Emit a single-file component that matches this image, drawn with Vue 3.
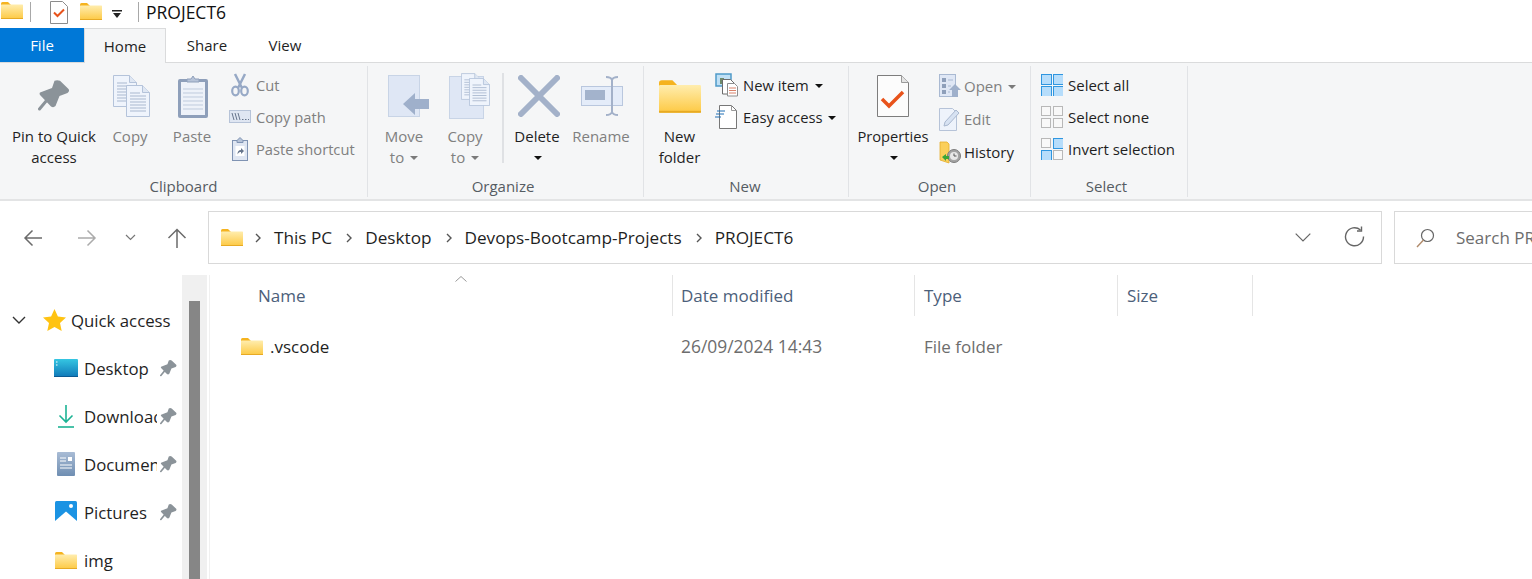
<template>
  <div class="explorer">
    <svg class="defs" aria-hidden="true">
      <defs>
        <linearGradient id="folderFill" x1="0" y1="0" x2="0" y2="1">
          <stop offset="0" stop-color="#ffedae" />
          <stop offset="1" stop-color="#fdc943" />
        </linearGradient>
        <linearGradient id="desktopFill" x1="0" y1="0" x2="0" y2="1">
          <stop offset="0" stop-color="#35c6e2" />
          <stop offset="1" stop-color="#0f78b8" />
        </linearGradient>
        <linearGradient id="docsFill" x1="0" y1="0" x2="0" y2="1">
          <stop offset="0" stop-color="#a9bcd5" />
          <stop offset="1" stop-color="#6f8eb2" />
        </linearGradient>
        <symbol id="folder" viewBox="0 0 22 17">
          <path d="M0 1.500Q0 0 1.500 0H7l3 3H0z" fill="#f5b31f" />
          <rect y="2.500" width="22" height="14.500" rx="0.600" fill="url(#folderFill)" />
          <rect y="16" width="22" height="1" fill="#e7aa24" />
        </symbol>
        <symbol id="pin" viewBox="0 0 32 32">
          <path d="M2 12.500Q1 14 2.500 15.500L13 26.500Q15.500 28 17.500 26L21.500 16 29.500 13Q32 11 30.500 9L22 .8Q19-.5 16.500.8L14 8z" fill="#8b9399" />
          <path d="M9 20 1.500 29" stroke="#8b9399" stroke-width="3" stroke-linecap="round" />
        </symbol>
        <symbol id="sheet" viewBox="0 0 24 32">
          <path d="M.5.500h16l7 7v24H.5z" fill="#eff4fc" stroke="#b4c3da" />
          <path d="M16.500.500v7h7" fill="#dfe7f3" stroke="#b4c3da" />
          <path d="M4 8h10M4 11h16M4 14h16M4 17h16M4 20h16M4 23h16M4 26h16" stroke="#a9b8cf" />
        </symbol>
      </defs>
    </svg>

    <header class="titlebar">
      <svg class="qa-folder" width="22" height="17"><use href="#folder" /></svg>
      <span class="qa-sep"></span>
      <svg class="qa-check" width="18" height="23" viewBox="0 0 18 23">
        <path d="M.5.500h12l5 5v17H.5z" fill="#fff" stroke="#8c8c8c" />
        <path d="M4 11.500l3.500 3.500L14 8.500" fill="none" stroke="#e8531b" stroke-width="2" />
      </svg>
      <svg class="qa-folder-two" width="22" height="17"><use href="#folder" /></svg>
      <svg class="qa-drop" width="10" height="8" viewBox="0 0 10 8">
        <rect width="10" height="1.500" fill="#222" />
        <path d="M1 3h8L5 8z" fill="#222" />
      </svg>
      <span class="qa-sep qa-sep-two"></span>
      <span class="window-title">PROJECT6</span>
    </header>

    <nav class="tabs">
      <span class="tab tab-file">File</span>
      <span class="tab tab-home">Home</span>
      <span class="tab tab-share">Share</span>
      <span class="tab tab-view">View</span>
    </nav>

    <section class="ribbon">
      <div class="group group-clipboard">
        <div class="group-body">
          <div class="large btn-pin">
            <div class="large-icon"><svg width="32" height="32"><use href="#pin" /></svg></div>
            <span>Pin to Quick<br />access</span>
          </div>
          <div class="large btn-copy off">
            <div class="large-icon">
              <svg width="38" height="42" viewBox="0 0 38 42">
                <use href="#sheet" width="24" height="32" />
                <use href="#sheet" x="13" y="10" width="24" height="32" />
              </svg>
            </div>
            <span>Copy</span>
          </div>
          <div class="large btn-paste off">
            <div class="large-icon">
              <svg width="30" height="43" viewBox="0 0 30 43">
                <rect y="4" width="30" height="39" rx="2" fill="#8e9fba" />
                <rect x="3" y="7" width="24" height="33" fill="#eef2f9" />
                <path d="M5 14h20M5 18h20M5 22h20M5 26h20M5 30h20M5 34h20" stroke="#bfcbdd" />
                <path d="M9 7V4h4l2-3 2 3h4v3z" fill="#b6c3d8" stroke="#8e9fba" />
              </svg>
            </div>
            <span>Paste</span>
          </div>
          <div class="small-col off clip-col">
            <div class="small">
              <svg width="24" height="24" viewBox="0 0 24 24">
                <path d="M7 1l7 14M17 1l-7 14" stroke="#97a9c6" stroke-width="2.500" fill="none" />
                <ellipse cx="7.500" cy="18" rx="3.300" ry="4.300" fill="none" stroke="#97a9c6" stroke-width="2.200" />
                <ellipse cx="16.500" cy="18" rx="3.300" ry="4.300" fill="none" stroke="#97a9c6" stroke-width="2.200" />
              </svg>
              <span>Cut</span>
            </div>
            <div class="small">
              <svg width="24" height="24" viewBox="0 0 24 24">
                <rect x="1.500" y="5.500" width="21" height="12" fill="#dfe6f2" stroke="#b6c3d8" />
                <path d="M4 8l2 7M7 8l2 7M10 8l2 7" stroke="#66758c" />
                <path d="M14 14.500h1.500M17 14.500h1.500M20 14.500h1" stroke="#66758c" />
              </svg>
              <span>Copy path</span>
            </div>
            <div class="small">
              <svg width="24" height="24" viewBox="0 0 24 24">
                <rect x="4.500" y="3.500" width="15" height="20" fill="#dfe6f2" stroke="#7f93b3" />
                <path d="M9 3.500l3-3 3 3v2H9z" fill="#b6c3d8" stroke="#7f93b3" />
                <rect x="7.500" y="9" width="9" height="10" fill="#fff" />
                <path d="M9.500 17.500c0-3 1-4.500 3.500-4.500v-2l3 3-3 3v-2c-1.500 0-2.500.5-3.500 2.500z" fill="#66758c" />
              </svg>
              <span>Paste shortcut</span>
            </div>
          </div>
        </div>
        <div class="group-name">Clipboard</div>
      </div>

      <div class="group group-organize">
        <div class="group-body">
          <div class="large btn-move off">
            <div class="large-icon">
              <svg width="42" height="42" viewBox="0 0 42 42">
                <rect x=".5" y=".5" width="31" height="41" fill="#dfe7f5" stroke="#c8d4e6" />
                <path d="M15 29 27 18v6h14v10H27v6z" fill="#9fb0cb" />
              </svg>
            </div>
            <span>Move<br />to <i class="caret"></i></span>
          </div>
          <div class="large btn-copyto off">
            <div class="large-icon">
              <svg width="42" height="46" viewBox="0 0 42 46">
                <rect x=".5" y="3.500" width="34" height="42" fill="#dfe7f5" stroke="#c8d4e6" />
                <use href="#sheet" x="12" y="0" width="20" height="27" />
                <use href="#sheet" x="20" y="5" width="21" height="28" />
              </svg>
            </div>
            <span>Copy<br />to <i class="caret"></i></span>
          </div>
          <span class="inner-sep"></span>
          <div class="large btn-delete">
            <div class="large-icon">
              <svg width="42" height="42" viewBox="0 0 42 42">
                <path d="M3 3l36 36M39 3 3 39" stroke="#a3b1c9" stroke-width="6" stroke-linecap="round" />
              </svg>
            </div>
            <span>Delete<br /><i class="caret dark"></i></span>
          </div>
          <div class="large btn-rename off">
            <div class="large-icon">
              <svg width="42" height="40" viewBox="0 0 42 40">
                <rect x=".5" y="10.500" width="41" height="19" fill="#e4ecf9" stroke="#b9c7de" />
                <rect x="4" y="14" width="20" height="10" fill="#a3b3cc" />
                <path d="M25 1q5 0 6 3 1-3 6-3M31 4v32M25 39q5 0 6-3 1 3 6 3" fill="none" stroke="#a3b1c9" stroke-width="2" />
              </svg>
            </div>
            <span>Rename</span>
          </div>
        </div>
        <div class="group-name">Organize</div>
      </div>

      <div class="group group-new">
        <div class="group-body">
          <div class="large btn-newfolder">
            <div class="large-icon"><svg width="42" height="33"><use href="#folder" /></svg></div>
            <span>New<br />folder</span>
          </div>
          <div class="small-col">
            <div class="small">
              <svg width="24" height="24" viewBox="0 0 24 24">
                <rect x="1" y="1" width="15" height="12" fill="#bfe0f5" stroke="#4f9ac9" stroke-width="1.500" />
                <rect x="5" y="5" width="4" height="6" fill="#6f8a6a" />
                <path d="M7.500 6.500h8l4 4V21h-12z" fill="#fff" stroke="#6b6b6b" />
                <path d="M12.500 10.500h7l3 3v9.500h-10z" fill="#fff" stroke="#8e8e8e" />
                <path d="M14 15h7M14 17.500h7M14 20h7" stroke="#d9826b" />
              </svg>
              <span>New item <i class="caret dark"></i></span>
            </div>
            <div class="small">
              <svg width="24" height="24" viewBox="0 0 24 24">
                <path d="M4.500.5h12l5 5v18h-17z" fill="#fff" stroke="#777" />
                <path d="M16.500.5v5h5" fill="none" stroke="#999" />
                <path d="M2 6h8M1 9h8M0 12h6" stroke="#1f6fb5" />
              </svg>
              <span>Easy access <i class="caret dark"></i></span>
            </div>
          </div>
        </div>
        <div class="group-name">New</div>
      </div>

      <div class="group group-open">
        <div class="group-body">
          <div class="large btn-props">
            <div class="large-icon">
              <svg width="32" height="42" viewBox="0 0 32 42">
                <path d="M.5.500h24l7 7v34H.5z" fill="#fcfcfc" stroke="#7d7d7d" />
                <path d="M24.500.500v7h7" fill="#e4e4e4" stroke="#9a9a9a" />
                <path d="M5 24l7 7 14-14" fill="none" stroke="#e8531b" stroke-width="3.500" />
              </svg>
            </div>
            <span>Properties<br /><i class="caret dark"></i></span>
          </div>
          <div class="small-col open-col">
            <div class="small off">
              <svg width="22" height="24" viewBox="0 0 22 24">
                <rect x=".5" y=".5" width="16" height="22" fill="#dfe7f5" stroke="#a9b9d2" />
                <path d="M3 4h4v4H3zM3 10h4v4H3zM3 16h4v4H3z" fill="#8e9fba" />
                <path d="M9 6h5M9 12h3M9 18h2" stroke="#a9b9d2" />
                <path d="M16 10l6 6h-3v7h-6v-7h-3z" fill="#9fb0cb" />
              </svg>
              <span>Open <i class="caret"></i></span>
            </div>
            <div class="small off">
              <svg width="22" height="24" viewBox="0 0 22 24">
                <path d="M.5 1.500h13l4 4v18H.5z" fill="#eef3fb" stroke="#b6c3d8" />
                <path d="M5 19l1-4L17 3l3 3L9 18z" fill="#d7e2f2" stroke="#a9b8cf" />
              </svg>
              <span>Edit</span>
            </div>
            <div class="small">
              <svg width="22" height="24" viewBox="0 0 22 24">
                <path d="M1 2h7l2 2v19l-9-3z" fill="#fbcf5a" stroke="#e5ad2c" stroke-width=".8" />
                <circle cx="15" cy="16" r="6.500" fill="#a4a4a4" stroke="#7d7d7d" />
                <circle cx="15" cy="16" r="4" fill="#e8e8e8" />
                <path d="M15 13.500V16h2.500" fill="none" stroke="#555" />
                <path d="M3 17l4-3v2h3v3H7v2z" fill="#3aa53a" />
              </svg>
              <span>History</span>
            </div>
          </div>
        </div>
        <div class="group-name">Open</div>
      </div>

      <div class="group group-select">
        <div class="group-body">
          <div class="small-col select-col">
            <div v-for="item in selectItems" :key="item.label" class="small">
              <svg width="22" height="22" viewBox="0 0 22 22">
                <rect
                  v-for="(on, i) in item.cells"
                  :key="i"
                  :x="i % 2 ? 12.5 : 0.5"
                  :y="i > 1 ? 12.5 : 0.5"
                  :width="on ? 10 : 9"
                  :height="on ? 10 : 9"
                  :fill="on ? '#b6ddfb' : '#f8f8f8'"
                  :stroke="on ? '#2f96e0' : '#b8b8b8'"
                />
              </svg>
              <span>{{ item.label }}</span>
            </div>
          </div>
        </div>
        <div class="group-name">Select</div>
      </div>
    </section>

    <div class="navbar">
      <div class="nav-btns">
        <span class="nav-btn back">
          <svg width="20" height="18" viewBox="0 0 20 18"><path d="M19 9H2M9.500 1.500 2 9l7.500 7.500" fill="none" stroke="#6b6b6b" stroke-width="1.500" /></svg>
        </span>
        <span class="nav-btn forward">
          <svg width="20" height="18" viewBox="0 0 20 18"><path d="M1 9h17M10.500 1.500 18 9l-7.500 7.500" fill="none" stroke="#ababab" stroke-width="1.500" /></svg>
        </span>
        <span class="nav-btn recent">
          <svg width="11" height="7" viewBox="0 0 11 7"><path d="M1 1l4.500 4.500L10 1" fill="none" stroke="#777" stroke-width="1.200" /></svg>
        </span>
        <span class="nav-btn up">
          <svg width="20" height="20" viewBox="0 0 20 20"><path d="M10 20V2M1.500 10 10 1.500l8.500 8.500" fill="none" stroke="#6b6b6b" stroke-width="1.500" /></svg>
        </span>
      </div>
      <div class="address">
        <svg width="22" height="17"><use href="#folder" /></svg>
        <template v-for="crumb in crumbs" :key="crumb">
          <svg class="crumb-sep" width="6" height="10" viewBox="0 0 6 10"><path d="M1 1l4 4-4 4" fill="none" stroke="#555" stroke-width="1.400" /></svg>
          <span class="crumb">{{ crumb }}</span>
        </template>
        <svg class="addr-drop" width="16" height="9" viewBox="0 0 16 9"><path d="M.7.7 8 8 15.300.7" fill="none" stroke="#666" stroke-width="1.200" /></svg>
        <svg class="addr-refresh" width="21" height="21" viewBox="0 0 21 21">
          <path d="M16.500 4a9 9 0 1 0 3 6.500" fill="none" stroke="#666" stroke-width="1.400" />
          <path d="M17.500 .5V5H13" fill="none" stroke="#666" stroke-width="1.400" />
        </svg>
      </div>
      <div class="search">
        <svg width="19" height="20" viewBox="0 0 19 20">
          <circle cx="11.500" cy="7.500" r="6" fill="none" stroke="#666" stroke-width="1.200" />
          <path d="M7.500 12 1 19" stroke="#b08a6a" stroke-width="1.400" />
        </svg>
        <span>Search PROJECT6</span>
      </div>
    </div>

    <main class="main">
      <aside class="sidebar">
        <div class="side-row quick">
          <svg class="quick-chevron" width="14" height="9" viewBox="0 0 14 9"><path d="M1 1l6 6 6-6" fill="none" stroke="#333" stroke-width="1.400" /></svg>
          <svg class="quick-star" width="23" height="23" viewBox="0 0 23 23">
            <path d="M11.500 0l3.400 7.500 8.100.9-6 5.500 1.700 8.100-7.200-4.100L4.300 22 6 13.900 0 8.400l8.100-.9z" fill="#ffc312" />
          </svg>
          <span class="quick-label">Quick access</span>
        </div>
        <div v-for="item in quickItems" :key="item.label" class="side-row">
          <span class="side-icon">
            <svg v-if="item.icon === 'desktop'" width="24" height="18" viewBox="0 0 24 18">
              <rect width="24" height="18" rx="1" fill="url(#desktopFill)" />
              <rect y="17" width="24" height="1" fill="#0b5a92" />
              <path d="M2 3h1.500M2 6h1.500" stroke="#fff" />
            </svg>
            <svg v-else-if="item.icon === 'download'" width="16" height="23" viewBox="0 0 16 23">
              <path d="M8 0v17M1.500 10.500 8 17l6.500-6.500" fill="none" stroke="#1db394" stroke-width="1.600" />
              <path d="M0 22h16" stroke="#1db394" stroke-width="1.600" />
            </svg>
            <svg v-else-if="item.icon === 'docs'" width="18" height="24" viewBox="0 0 18 24">
              <rect width="18" height="24" rx="1" fill="url(#docsFill)" />
              <path d="M3 6h6M3 9h6M3 13h12M3 16h12" stroke="#fff" />
              <rect x="11" y="5" width="4" height="4" fill="#fff" />
            </svg>
            <svg v-else-if="item.icon === 'pictures'" width="22" height="22" viewBox="0 0 22 22">
              <rect width="22" height="22" rx="1.500" fill="#1b93e3" />
              <path d="M0 20 11 10.500 22 20v2H0z" fill="#fff" />
              <circle cx="16" cy="5" r="2" fill="#fff" />
            </svg>
            <svg v-else width="22" height="17"><use href="#folder" /></svg>
          </span>
          <span class="side-label">{{ item.label }}</span>
          <svg v-if="item.pinned" class="side-pin" width="17" height="17"><use href="#pin" /></svg>
        </div>
      </aside>

      <div class="scroll-track"><div class="scroll-thumb"></div></div>

      <section class="files">
        <div class="file-head">
          <svg class="sort-caret" width="12" height="6" viewBox="0 0 12 6"><path d="M.5 5.500 6 .5l5.500 5" fill="none" stroke="#999" /></svg>
          <span v-for="col in columns" :key="col" class="file-col">{{ col }}</span>
        </div>
        <div class="file-row">
          <span class="file-name">
            <svg width="22" height="17"><use href="#folder" /></svg>
            <span>.vscode</span>
          </span>
          <span class="file-meta meta-date">26/09/2024 14:43</span>
          <span class="file-meta">File folder</span>
          <span class="file-meta"></span>
        </div>
      </section>
    </main>
  </div>
</template>

<script setup>
const crumbs = ['This PC', 'Desktop', 'Devops-Bootcamp-Projects', 'PROJECT6']

const columns = ['Name', 'Date modified', 'Type', 'Size']

const quickItems = [
  { label: 'Desktop', icon: 'desktop', pinned: true },
  { label: 'Downloads', icon: 'download', pinned: true },
  { label: 'Documents', icon: 'docs', pinned: true },
  { label: 'Pictures', icon: 'pictures', pinned: true },
  { label: 'img', icon: 'folder', pinned: false },
]

const selectItems = [
  { label: 'Select all', cells: [true, true, true, true] },
  { label: 'Select none', cells: [false, false, false, false] },
  { label: 'Invert selection', cells: [false, true, true, false] },
]
</script>

<style>
html,
body {
  margin: 0;
  background: #fff;
}
</style>

<style scoped>
.explorer {
  position: relative;
  width: 1532px;
  height: 579px;
  overflow: hidden;
  background: #fff;
  font-family: "Open Sans", "Noto Sans", sans-serif;
  font-size: 15px;
  color: #1f1f1f;
}

.defs {
  position: absolute;
  width: 0;
  height: 0;
}

svg {
  display: block;
  flex: none;
}

/* title bar */
.titlebar {
  display: flex;
  align-items: center;
  height: 28px;
}

.qa-folder {
  margin: -7px 0 0 1px;
}

.qa-sep {
  width: 1px;
  height: 20px;
  margin: -4px 0 0 7px;
  background: #a8a8a8;
}

.qa-check {
  margin: -4px 0 0 19px;
}

.qa-folder-two {
  margin: -5px 0 0 12px;
}

.qa-drop {
  margin: 0 0 0 10px;
}

.qa-sep-two {
  margin-left: 16px;
}

.window-title {
  margin: -4px 0 0 7px;
  font-size: 17.5px;
  color: #111;
}

/* tabs */
.tabs {
  position: relative;
  z-index: 1;
  display: flex;
  height: 34px;
}

.tab {
  display: flex;
  align-items: center;
  justify-content: center;
  box-sizing: border-box;
  height: 34px;
}

.tab-file {
  width: 84px;
  background: #0078d7;
  color: #fff;
}

.tab-home {
  width: 82px;
  height: 35px;
  border: 1px solid #dadbdc;
  border-bottom: 0;
  background: #f5f6f7;
}

.tab-share {
  width: 82px;
}

.tab-view {
  width: 56px;
  margin-left: 9px;
}

/* ribbon */
.ribbon {
  display: flex;
  box-sizing: border-box;
  height: 139px;
  padding-top: 3px;
  border-top: 1px solid #dadbdc;
  border-bottom: 2px solid #e3e4e5;
  background: #f5f6f7;
}

.group {
  display: flex;
  flex-direction: column;
  box-sizing: border-box;
  height: 131px;
  border-right: 1px solid #e1e3e6;
}

.group-clipboard {
  width: 368px;
}

.group-organize {
  width: 276px;
}

.group-new {
  width: 205px;
}

.group-open {
  width: 182px;
}

.group-select {
  width: 157px;
}

.group-body {
  display: flex;
  height: 110px;
}

.group-name {
  height: 21px;
  padding-right: 5px;
  line-height: 21px;
  text-align: center;
  color: #555c63;
}

.group-clipboard .group-name {
  padding-right: 0;
}

.group-new .group-name {
  padding-right: 2px;
}

.large {
  display: flex;
  flex-direction: column;
  align-items: center;
  flex: none;
  line-height: 21px;
  text-align: center;
  white-space: nowrap;
}

.large-icon {
  display: flex;
  align-items: center;
  height: 60px;
}

.off {
  color: #808080;
}

.btn-pin {
  width: 108px;
}

.btn-copy {
  width: 44px;
}

.btn-copy svg {
  margin-left: 3px;
}

.btn-paste {
  width: 80px;
}

.btn-paste svg {
  margin-left: 1px;
}

.small-col {
  display: flex;
  flex-direction: column;
  padding-top: 3px;
  margin-left: -4px;
}

.small {
  display: flex;
  align-items: center;
  gap: 4px;
  height: 32px;
  white-space: nowrap;
}

.clip-col {
  font-size: 14.700px;
}

.caret {
  display: inline-block;
  width: 0;
  height: 0;
  margin: 0 0 3px 2px;
  border: 4px solid transparent;
  border-top-color: #7a7a7a;
  border-bottom: 0;
}

.caret.dark {
  border-top-color: #111;
}

.btn-move {
  width: 72px;
}

.btn-copyto {
  width: 50px;
}

.btn-move svg,
.btn-copyto svg {
  margin-left: 10px;
}

.inner-sep {
  width: 2px;
  height: 90px;
  margin: 7px 0 0 12px;
  background: #dfe1e4;
}

.btn-delete {
  width: 66px;
}

.btn-delete svg {
  margin-left: 4px;
}

.btn-rename {
  width: 62px;
}

.btn-rename svg {
  margin-left: 2px;
}

.btn-newfolder {
  width: 71px;
}

.group-new .small-col {
  margin-left: 0;
  font-size: 14.800px;
}

.btn-props {
  width: 88px;
  font-size: 14.700px;
}

.open-col {
  margin-left: 2px;
  padding-top: 3px;
}

.open-col .small {
  height: 33px;
  gap: 3px;
}

.select-col {
  margin-left: 10px;
}

.select-col .small {
  gap: 5px;
}

/* nav bar */
.navbar {
  display: flex;
  box-sizing: border-box;
  height: 74px;
  padding-top: 10px;
}

.nav-btns {
  display: flex;
  flex: none;
  width: 208px;
  height: 53px;
}

.nav-btn {
  display: flex;
  align-items: center;
  justify-content: center;
}

.back {
  width: 66px;
}

.forward {
  width: 42px;
}

.recent {
  width: 44px;
}

.up {
  width: 50px;
}

.address,
.search {
  display: flex;
  flex: none;
  align-items: center;
  box-sizing: border-box;
  height: 53px;
  border: 1px solid #d9d9d9;
}

.address {
  width: 1174px;
  padding-left: 12px;
}

.crumb-sep {
  margin: 0 13px 0 12px;
}

.crumb {
  margin-right: 2px;
  font-size: 17.200px;
}

.addr-drop {
  margin-left: auto;
}

.addr-refresh {
  margin: -2px 16px 0 33px;
}

.search {
  width: 300px;
  margin-left: 12px;
  padding-left: 21px;
  gap: 21px;
  white-space: nowrap;
  color: #6d6d6d;
  font-size: 17px;
}

/* main */
.main {
  display: flex;
  height: 304px;
}

.sidebar {
  width: 182px;
  flex: none;
  padding-top: 21px;
  overflow: hidden;
}

.side-row {
  display: flex;
  align-items: center;
  height: 48px;
}

.quick {
  padding-left: 12px;
}

.quick-star {
  margin-left: 17px;
}

.quick-label {
  margin-left: 5px;
  font-size: 16.800px;
  white-space: nowrap;
}

.side-icon {
  display: flex;
  justify-content: center;
  width: 24px;
  margin-left: 54px;
}

.side-label {
  width: 73px;
  margin-left: 6px;
  overflow: hidden;
  font-size: 16.800px;
  white-space: nowrap;
}

.side-pin {
  margin-left: 3px;
}

.scroll-track {
  width: 25px;
  flex: none;
  background: #f0f0f0;
  padding-top: 26px;
  box-sizing: border-box;
}

.scroll-thumb {
  width: 11px;
  height: 278px;
  margin-left: 7px;
  background: #868686;
}

.files {
  position: relative;
  flex: 1;
  margin-left: 2px;
  border-left: 1px solid #f0f0f0;
}

.file-head,
.file-row {
  display: grid;
  grid-template-columns: 463px 242px 203px 135px;
  align-items: center;
}

.file-head {
  height: 41px;
}

.file-col {
  display: flex;
  align-items: center;
  box-sizing: border-box;
  height: 41px;
  padding-left: 9px;
  border-right: 1px solid #e5e5e5;
  font-size: 17px;
  color: #4c607a;
}

.file-col:first-of-type {
  padding-left: 48px;
}

.file-col:nth-of-type(2) {
  padding-left: 8px;
}

.sort-caret {
  position: absolute;
  top: 1px;
  left: 245px;
}

.file-row {
  height: 60px;
}

.file-name {
  display: flex;
  align-items: center;
  gap: 7px;
  padding-left: 31px;
  font-size: 17px;
}

.file-meta {
  padding-left: 9px;
  font-size: 17px;
  color: #6d6d6d;
}

.meta-date {
  padding-left: 8px;
  font-size: 17.400px;
}
</style>
